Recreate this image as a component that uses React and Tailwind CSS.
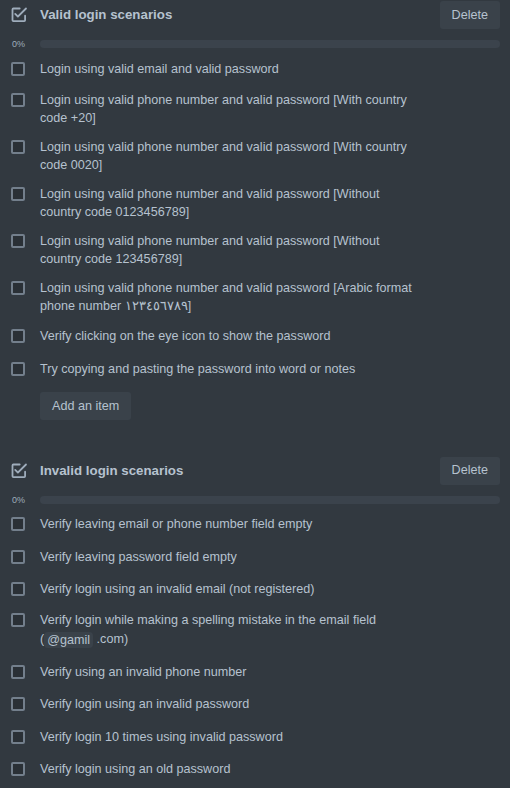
import React from 'react';

const validItems = [
  ['Login using valid email and valid password'],
  ['Login using valid phone number and valid password [With country', 'code +20]'],
  ['Login using valid phone number and valid password [With country', 'code 0020]'],
  ['Login using valid phone number and valid password [Without', 'country code 0123456789]'],
  ['Login using valid phone number and valid password [Without', 'country code 123456789]'],
  ['Login using valid phone number and valid password [Arabic format', 'phone number ١٢٣٤٥٦٧٨٩]'],
  ['Verify clicking on the eye icon to show the password'],
  ['Try copying and pasting the password into word or notes'],
];

const invalidItems = [
  ['Verify leaving email or phone number field empty'],
  ['Verify leaving password field empty'],
  ['Verify login using an invalid email (not registered)'],
  'chip',
  ['Verify using an invalid phone number'],
  ['Verify login using an invalid password'],
  ['Verify login 10 times using invalid password'],
  ['Verify login using an old password'],
];

function ChecklistIcon() {
  return (
    <svg width="21.6" height="21.6" viewBox="0 0 24 24" fill="none" className="text-[#9fadbc]">
      <path
        fill="currentColor"
        fillRule="evenodd"
        d="M6 4a2 2 0 0 0-2 2v12a2 2 0 0 0 2 2h12a2 2 0 0 0 2-2v-5a1 1 0 1 0-2 0v5H6V6h7a1 1 0 1 0 0-2H6z"
      />
      <path
        fill="currentColor"
        d="M8.707 10.293a1 1 0 0 0-1.414 1.414l3 3a1 1 0 0 0 1.414 0l9-9a1 1 0 0 0-1.414-1.414L11 12.586l-2.293-2.293z"
      />
    </svg>
  );
}

function Checkbox() {
  return (
    <span className="mt-[7.5px] block h-[14px] w-[14px] shrink-0 rounded-[2px] border-2 border-[#737f8c] bg-[#2a3036]" />
  );
}

function ChecklistItem({ lines }) {
  return (
    <div className="flex min-h-[32.5px] items-center">
      <div className="flex items-start">
        <div className="w-[40px] shrink-0 pl-[11px]">
          <Checkbox />
        </div>
        <div className="py-[5.5px] text-[12.6px] leading-[18px] text-[#b6c2cf]">
          {lines.map((line, i) => (
            <div key={i}>{line}</div>
          ))}
        </div>
      </div>
    </div>
  );
}

function ChipItem() {
  return (
    <div className="flex min-h-[32.5px] items-center">
      <div className="flex items-start">
        <div className="w-[40px] shrink-0 pl-[11px]">
          <Checkbox />
        </div>
        <div className="py-[5.25px] text-[12.6px] leading-[18px] text-[#b6c2cf]">
          <div>Verify login while making a spelling mistake in the email field</div>
          <div className="leading-[21.5px]">
            (
            <span className="mt-[2px] inline-block rounded-[4px] bg-[#3a424a] px-[3px] align-middle leading-[16px]">
              @gamil
            </span>{' '}
            .com)
          </div>
        </div>
      </div>
    </div>
  );
}

function Checklist({ title, items, showAdd }) {
  return (
    <section>
      <div className="flex h-[30px] items-center pr-[10px]">
        <div className="flex w-[40px] shrink-0 pl-[7.5px]">
          <ChecklistIcon />
        </div>
        <h3 className="flex-1 text-[13.3px] font-bold text-[#b6c2cf]">{title}</h3>
        <button className="h-[28px] rounded-[3px] bg-[#3a424a] px-[12px] text-[12.6px] font-medium text-[#b6c2cf]">
          Delete
        </button>
      </div>

      <div className="flex items-center pr-[10px] pt-[10px] pb-[4.5px]">
        <span className="w-[40px] shrink-0 pl-[12px] text-[9px] leading-[8px] text-[#9fadbc]">0%</span>
        <div className="h-[8px] flex-1 rounded-full bg-[#3b434c]" />
      </div>

      <div>
        {items.map((item, i) =>
          item === 'chip' ? <ChipItem key={i} /> : <ChecklistItem key={i} lines={item} />
        )}
      </div>

      {showAdd && (
        <div className="mt-[7px] pl-[40px]">
          <button className="h-[28px] rounded-[3px] bg-[#3a424a] px-[12px] text-[12.6px] font-medium text-[#b6c2cf]">
            Add an item
          </button>
        </div>
      )}
    </section>
  );
}

export default function App() {
  return (
    <div className="min-h-[788px] w-[510px] overflow-hidden bg-[#323940] font-['Liberation_Sans',Arial,sans-serif]">
      <Checklist title="Valid login scenarios" items={validItems} showAdd />
      <div className="mt-[35.5px]">
        <Checklist title="Invalid login scenarios" items={invalidItems} />
      </div>
    </div>
  );
}
